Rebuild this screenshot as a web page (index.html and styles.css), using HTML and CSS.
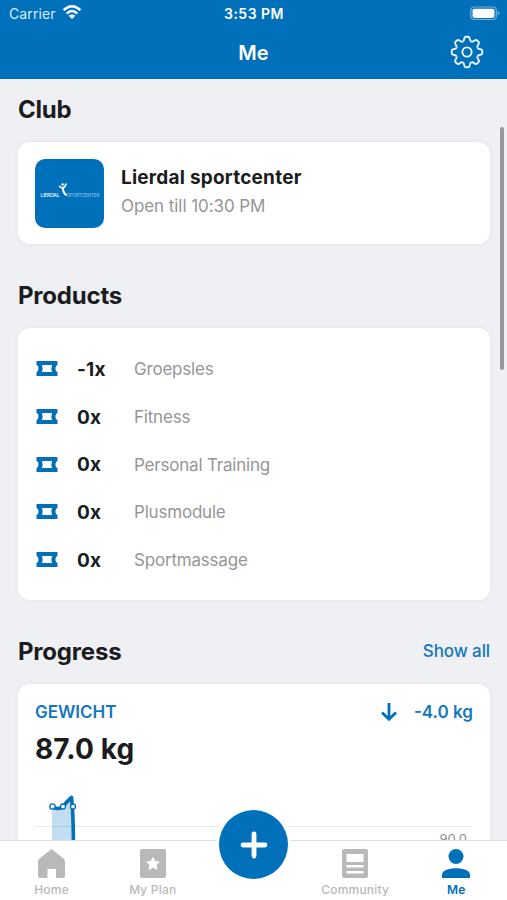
FILE: index.html
```
<!DOCTYPE html>
<html lang="en">
<head>
<meta charset="utf-8">
<meta name="viewport" content="width=device-width">
<title>Me</title>
<link rel="stylesheet" href="styles.css">
</head>
<body>
<svg width="0" height="0" class="defs" aria-hidden="true">
  <symbol id="ticket" viewBox="0 0 22 16">
    <path fill-rule="evenodd" d="M.5 .5H21.500V4.500C18.800 5.500 18.800 10.500 21.500 11.500V15.500H.5V11.500C3.200 10.500 3.200 5.500 .5 4.500ZM6 4.500Q7.200 8 6 11.500H16Q14.800 8 16 4.500Z"/>
  </symbol>
  <symbol id="tooth" viewBox="-17 -17 34 34">
    <path d="M-4.300-10.400C-3.200-10.900-2.900-11.800-2.700-13.500Q-2.500-15.300-1.200-15.300H1.200Q2.500-15.300 2.700-13.500C2.900-11.800 3.200-10.900 4.300-10.400"/>
  </symbol>
</svg>
<div class="screen">
  <header class="header">
    <div class="status">
      <div class="carrier"><span>Carrier</span>
        <svg width="20" height="15" viewBox="0 0 20 15" fill="none" stroke="#fff" stroke-width="2.500"><path d="M1.600 5.200Q10-2.600 18.400 5.200M4.700 8.500Q10 3.600 15.300 8.500"/><path d="M10 14L6.700 10.800Q10 8 13.300 10.800Z" fill="#fff" stroke="none"/></svg>
      </div>
      <span class="time">3:53 PM</span>
      <svg class="battery" width="30" height="15" viewBox="0 0 30 15"><rect x=".8" y="1" width="25.500" height="12.500" rx="3.500" fill="none" stroke="#72b1de" stroke-width="1.200"/><rect x="2.500" y="2.700" width="22" height="9.200" rx="1.800" fill="#fff"/><path d="M27.700 5v4.500Q29.500 8.800 29.500 7.200T27.700 5" fill="#72b1de"/></svg>
    </div>
    <div class="titlebar">
      <h1>Me</h1>
      <svg class="gear" width="34" height="34" viewBox="-17 -17 34 34" fill="none" stroke="#e9f6ff" stroke-width="1.900">
        <g id="pair"><use href="#tooth" x="-17" y="-17" width="34" height="34"/><use href="#tooth" x="-17" y="-17" width="34" height="34" transform="rotate(45)"/></g>
        <use href="#pair" transform="rotate(90)"/><use href="#pair" transform="rotate(180)"/><use href="#pair" transform="rotate(270)"/>
        <circle r="4.600"/>
      </svg>
    </div>
  </header>

  <main class="content">
    <section>
      <div class="heading"><h2 class="h-club">Club</h2></div>
      <div class="card club">
        <div class="logo">
          <span class="logo-a">LIERDAL</span>
          <svg width="10" height="15" viewBox="0 0 10 15" fill="none" stroke="#fff"><circle cx="4.600" cy="2.500" r="1.200" fill="#fff" stroke="none"/><path stroke-width="1.700" d="M1 4Q3 6 5 6Q7.500 5 8 1.500"/><path stroke-width="2" d="M5 5.500Q4.500 10 8.500 13.500"/></svg>
          <span class="logo-b">SPORTCENTER</span>
        </div>
        <div class="club-text">
          <div class="club-name">Lierdal sportcenter</div>
          <div class="club-open">Open till 10:30 PM</div>
        </div>
      </div>
    </section>

    <section>
      <div class="heading"><h2 class="h-products">Products</h2></div>
      <ul class="card products">
        <li><svg><use href="#ticket"/></svg><b>-1x</b><span>Groepsles</span></li>
        <li><svg><use href="#ticket"/></svg><b>0x</b><span>Fitness</span></li>
        <li><svg><use href="#ticket"/></svg><b>0x</b><span>Personal Training</span></li>
        <li><svg><use href="#ticket"/></svg><b>0x</b><span>Plusmodule</span></li>
        <li><svg><use href="#ticket"/></svg><b>0x</b><span>Sportmassage</span></li>
      </ul>
    </section>

    <section>
      <div class="heading"><h2 class="h-progress">Progress</h2><a class="show-all">Show all</a></div>
      <div class="card progress">
        <div class="metric"><span class="metric-name">GEWICHT</span>
          <span class="change"><svg width="18" height="20" viewBox="0 0 18 20" fill="none" stroke="#0070bb" stroke-width="2.800"><path d="M9 1V17M2 10.500L9 17.300L16 10.500"/></svg><span>-4.0 kg</span></span>
        </div>
        <div class="weight">87.0 kg</div>
        <div class="chart">
          <svg width="437" height="90" viewBox="0 0 437 90" fill="none">
            <path d="M0 57.500H437" stroke="#e6e7e9"/>
            <path d="M17 37Q24 43 29 37L37 29V90H17Z" fill="#0070bb" fill-opacity=".24"/>
            <path d="M17 37.500Q23 41.500 28.500 37.500Q31 33 36.500 28.500Q38.500 44 38.500 90" stroke="#0070bb" stroke-width="3.600" stroke-linejoin="round"/>
            <g fill="#fff" stroke="#0070bb" stroke-width="1.300"><circle cx="17.500" cy="37.500" r="2.700"/><circle cx="28" cy="37.500" r="2.500"/><circle cx="38" cy="37.500" r="2.500"/></g>
          </svg>
          <span class="axis">90.0</span>
        </div>
      </div>
    </section>
  </main>
  <div class="scrollbar"></div>

  <nav class="tabs">
    <a><svg width="30" height="32" viewBox="0 0 30 32"><path d="M14.500 1L27 11Q28 12 28 13.500V28Q28 30 26 30H19V21H10.500V30H3Q1 30 1 28V13.500Q1 12 2 11Z"/></svg><span>Home</span></a>
    <a><svg width="30" height="32" viewBox="0 0 30 32"><rect x="2" y="1" width="26" height="29" rx="2"/><path fill="#fff" stroke="#fff" stroke-linejoin="round" d="M15 9.500L16.900 13.500L21.200 14L18 17L18.900 21.300L15 19.200L11.100 21.300L12 17L8.800 14L13.100 13.500Z"/></svg><span>My Plan</span></a>
    <button class="add" aria-label="Add"><svg width="28" height="28" viewBox="0 0 28 28" stroke="#fff" stroke-width="4.800" stroke-linecap="round"><path d="M14 3V25M3 14H25"/></svg></button>
    <a><svg width="30" height="32" viewBox="0 0 30 32"><rect x="2" y="1" width="26" height="29" rx="2"/><path fill="#fff" d="M6.500 6H23.500V14H6.500ZM6.500 17H23.500V19.500H6.500ZM6.500 23H23.500V25.500H6.500Z"/></svg><span class="t-community">Community</span></a>
    <a class="active"><svg width="30" height="32" viewBox="0 0 30 32"><circle cx="15" cy="8.500" r="7.500"/><path d="M1 30V26.500C1 18 29 18 29 26.500V30Z"/></svg><span>Me</span></a>
  </nav>
</div>
</body>
</html>
```
FILE: styles.css
```
* { box-sizing: border-box; }
body { margin: 0; font-family: Inter, "Liberation Sans", sans-serif; color: #1b1c1e; }
h1, h2, ul { margin: 0; padding: 0; }
.defs { position: absolute; }
.screen { position: relative; width: 507px; height: 900px; display: flex; flex-direction: column; overflow: hidden; background: #eff0f4; }
.header { flex: none; height: 79px; background: #0070bb; color: #fff; }
.status { display: grid; grid-template-columns: 1fr auto 1fr; align-items: center; height: 27px; padding: 0 7px 0 9px; font-size: 14px; line-height: 27px; }
.carrier { display: flex; align-items: center; gap: 6px; color: #d9edfb; letter-spacing: .1px; }
.carrier svg { margin-top: -2px; }
.time { font-weight: 600; letter-spacing: .5px; margin-right: 1px; }
.battery { justify-self: end; margin-top: -1px; }
.titlebar { display: grid; grid-template-columns: 1fr auto 1fr; align-items: center; height: 50px; padding: 0 23px; }
.titlebar h1 { grid-column: 2; padding-top: 1px; font-size: 20px; font-weight: 600; line-height: 30px; }
.gear { justify-self: end; }
.content { flex: 1; min-height: 0; overflow: hidden; display: flex; flex-direction: column; gap: 36px; padding: 15px 17px 0 18px; }
.content section { flex: none; }
.heading { display: flex; justify-content: space-between; align-items: center; height: 30px; margin-bottom: 18px; line-height: 30px; }
h2 { padding-top: 1px; font-size: 24px; font-weight: 700; letter-spacing: -.2px; }
.show-all { color: #1377bd; font-size: 17px; font-weight: 500; letter-spacing: -.1px; }
.card { background: #fff; border-radius: 12px; box-shadow: 0 0 5px rgba(30, 40, 70, .06); }
.club { display: flex; align-items: center; gap: 17px; height: 102px; padding: 0 17px; }
.logo { display: flex; align-items: center; justify-content: center; width: 69px; height: 69px; border-radius: 10px; background: #0070bb; color: #fff; font-size: 5px; line-height: 8px; }
.logo svg { flex: none; margin: -7px -1px 0 -3px; }
.logo-a { padding-top: 3px; width: 20px; font-weight: 500; letter-spacing: -.2px; }
.logo-b { padding-top: 3px; width: 32px; color: #8fc2e6; letter-spacing: -.35px; }
.club-text { padding-bottom: 3px; }
.club-name { font-size: 19px; font-weight: 700; line-height: 28px; letter-spacing: .22px; }
.club-open { color: #959597; font-size: 17px; line-height: 28px; letter-spacing: -.07px; }
.products { list-style: none; padding: 17px 18px; height: 272px; }
.products li { display: grid; grid-template-columns: 41px 57px 1fr; align-items: center; height: 47.7px; }
.products svg { width: 22px; height: 17px; fill: #0070bb; }
.products b { padding-top: 1px; font-size: 19px; font-weight: 700; letter-spacing: .2px; }
.products span { padding-top: 1px; color: #959597; font-size: 17px; letter-spacing: -.2px; }
.progress { height: 240px; padding: 16px 17px; }
.metric { display: flex; justify-content: space-between; align-items: center; height: 24px; color: #1377bd; font-size: 17px; font-weight: 600; }
.change { display: flex; align-items: center; gap: 16px; }
.weight { height: 45px; font-size: 28px; font-weight: 700; line-height: 50px; letter-spacing: .15px; }
.chart { position: relative; }
.chart svg { display: block; }
.axis { position: absolute; right: 6px; top: 62px; color: #8e8e91; font-size: 13px; line-height: 16px; }
.scrollbar { position: absolute; right: 3px; top: 127px; width: 4px; height: 243px; border-radius: 2px; background: #99999c; }
.tabs { position: relative; flex: none; display: grid; grid-template-columns: repeat(5, 101.2px); height: 60px; padding-left: 1px; border-top: 1px solid #dfe0e2; background: #fff; }
.tabs a { display: flex; flex-direction: column; align-items: center; padding-top: 7px; color: #b9b9ba; fill: currentColor; font-size: 12px; font-weight: 500; line-height: 20px; }
.tabs a span { letter-spacing: .2px; }
.tabs .active { color: #0070bb; }
.tabs .active span { font-weight: 600; }
.add { justify-self: center; display: grid; place-items: center; width: 69px; height: 69px; margin-top: -31px; padding: 0; border: 0; border-radius: 50%; background: #0070bb; box-shadow: 0 0 0 3px #fff; }
```
